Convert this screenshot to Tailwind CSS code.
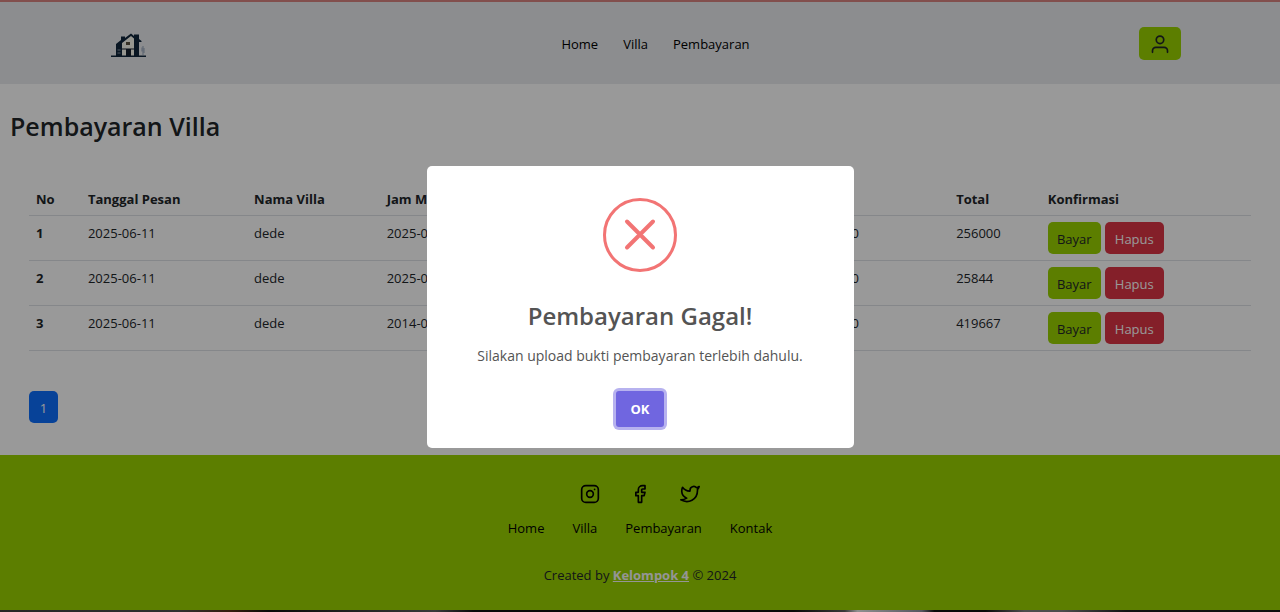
<!DOCTYPE html>
<html lang="id">
<head>
<meta charset="utf-8">
<meta name="viewport" content="width=device-width, initial-scale=1">
<title>Pembayaran Villa</title>
<script src="https://cdn.jsdelivr.net/npm/@tailwindcss/browser@4"></script>
</head>
<body class="min-h-screen bg-white font-['Open_Sans','Noto_Sans',sans-serif] text-[13px] leading-5 text-[#212529]">

<div class="h-[2px] bg-[#d98480]"></div>
<header class="flex h-[82px] items-center justify-between bg-[#e9ecef] pr-[99px] pl-[111px]">
  <a href="#" aria-label="Beranda" class="block pt-1">
    <svg class="h-[26px] w-9" viewBox="0 0 36 26">
      <path d="M11 11 L20 4 L24 7 V23.500 H11Z" fill="#fbfaf0"/>
      <path d="M5 12 L10 8 V4.500 H14 V6 L20 1.500 L23 4 V2.500 H28 V7 L30.500 9 V10 H28 V24 H23 V6.500 L20 4 L11 11 V24 H5Z" fill="#10253b"/>
      <path d="M15 10h4v3h-4z" fill="#5a5340"/>
      <path d="M11 16.500h12v1H11z M15 17h5v7h-5z" fill="#17212e"/>
      <path d="M6.500 18h3M6.500 21h3" stroke="#8997a5" stroke-width="1"/>
      <path d="M0 23.500h35v1.500H0z" fill="#10253b"/>
      <path d="M32 14v9M31 15.500v4M33 16v5" stroke="#94a3b8" stroke-width="1"/>
    </svg>
  </a>
  <nav class="flex gap-[25px] pt-px pl-[25px] text-black">
    <a href="#">Home</a>
    <a href="#">Villa</a>
    <a href="#">Pembayaran</a>
  </nav>
  <button type="button" aria-label="Akun" class="flex h-[33px] w-[42px] items-center justify-center rounded-[5px] bg-[#99d300] pt-[2px] text-[#212529]">
    <svg class="size-5" viewBox="0 0 24 24" fill="none" stroke="currentColor" stroke-width="2" stroke-linecap="round" stroke-linejoin="round"><path d="M21 22v-2a4 4 0 0 0-4-4H7a4 4 0 0 0-4 4v2"/><circle cx="12" cy="7" r="4.500"/></svg>
  </button>
</header>

<main>
  <h1 class="px-[10px] pt-[26px] pb-px text-[25px] leading-8 font-semibold">Pembayaran Villa</h1>
  <div class="px-[29px] pt-10 pb-8">
    <table class="w-full table-fixed border-collapse text-left">
      <colgroup>
        <col class="w-[4.25%]"><col class="w-[13.6%]"><col class="w-[10.85%]"><col class="w-[35%]"><col class="w-[11.6%]"><col class="w-[7.5%]"><col>
      </colgroup>
      <thead>
        <tr class="h-8 border-b border-[#dee2e6] font-bold">
          <th scope="col" class="px-[7px]">No</th>
          <th scope="col" class="px-[7px]">Tanggal Pesan</th>
          <th scope="col" class="px-[7px]">Nama Villa</th>
          <th scope="col" class="px-[7px]">Jam Masuk</th>
          <th scope="col" class="px-[7px]">Sewa</th>
          <th scope="col" class="px-[7px]">Total</th>
          <th scope="col" class="px-[7px]">Konfirmasi</th>
        </tr>
      </thead>
      <tbody class="align-top">
        <tr class="border-b border-[#dee2e6]">
          <th scope="row" class="px-[7px] pt-[7px]">1</th>
          <td class="px-[7px] pt-[7px]">2025-06-11</td>
          <td class="px-[7px] pt-[7px]">dede</td>
          <td class="px-[7px] pt-[7px]">2025-06-12</td>
          <td class="px-[7px] pt-[7px]">128000</td>
          <td class="px-[7px] pt-[7px]">256000</td>
          <td class="px-[7px] py-[6px]"><div class="flex gap-1">
            <button type="button" class="h-8 w-[53px] rounded-[5px] bg-[#99d300] pt-[2px]">Bayar</button>
            <button type="button" class="h-8 w-[59px] rounded-[5px] bg-[#dc3545] pt-[2px] text-white">Hapus</button>
          </div></td>
        </tr>
        <tr class="border-b border-[#dee2e6]">
          <th scope="row" class="px-[7px] pt-[7px]">2</th>
          <td class="px-[7px] pt-[7px]">2025-06-11</td>
          <td class="px-[7px] pt-[7px]">dede</td>
          <td class="px-[7px] pt-[7px]">2025-06-12</td>
          <td class="px-[7px] pt-[7px]">128000</td>
          <td class="px-[7px] pt-[7px]">25844</td>
          <td class="px-[7px] py-[6px]"><div class="flex gap-1">
            <button type="button" class="h-8 w-[53px] rounded-[5px] bg-[#99d300] pt-[2px]">Bayar</button>
            <button type="button" class="h-8 w-[59px] rounded-[5px] bg-[#dc3545] pt-[2px] text-white">Hapus</button>
          </div></td>
        </tr>
        <tr class="border-b border-[#dee2e6]">
          <th scope="row" class="px-[7px] pt-[7px]">3</th>
          <td class="px-[7px] pt-[7px]">2025-06-11</td>
          <td class="px-[7px] pt-[7px]">dede</td>
          <td class="px-[7px] pt-[7px]">2014-06-12</td>
          <td class="px-[7px] pt-[7px]">128000</td>
          <td class="px-[7px] pt-[7px]">419667</td>
          <td class="px-[7px] py-[6px]"><div class="flex gap-1">
            <button type="button" class="h-8 w-[53px] rounded-[5px] bg-[#99d300] pt-[2px]">Bayar</button>
            <button type="button" class="h-8 w-[59px] rounded-[5px] bg-[#dc3545] pt-[2px] text-white">Hapus</button>
          </div></td>
        </tr>
      </tbody>
    </table>
    <nav aria-label="Halaman" class="flex pt-10">
      <a href="#" aria-current="page" class="flex h-8 w-[29px] items-center justify-center rounded-[5px] bg-[#0d6efd] pt-[2px] text-white">1</a>
    </nav>
  </div>
</main>

<footer class="flex flex-col items-center bg-[#99d300] pt-[29px] pb-[25px]">
  <div class="flex gap-[30px] text-black">
    <a href="#" aria-label="Instagram"><svg class="size-5" viewBox="0 0 24 24" fill="none" stroke="currentColor" stroke-width="2" stroke-linecap="round" stroke-linejoin="round"><rect x="2" y="2" width="20" height="20" rx="5"/><circle cx="12" cy="12" r="4"/><path d="M17.500 6.500h.01"/></svg></a>
    <a href="#" aria-label="Facebook"><svg class="size-5" viewBox="0 0 24 24" fill="none" stroke="currentColor" stroke-width="2" stroke-linecap="round" stroke-linejoin="round"><path d="M18 2h-3a5 5 0 0 0-5 5v3H7v4h3v8h4v-8h3l1-4h-4V7a1 1 0 0 1 1-1h3z"/></svg></a>
    <a href="#" aria-label="Twitter"><svg class="size-5" viewBox="0 0 24 24" fill="none" stroke="currentColor" stroke-width="2" stroke-linecap="round" stroke-linejoin="round"><path d="M23 3a10.900 10.900 0 0 1-3.140 1.530 4.480 4.480 0 0 0-7.860 3v1A10.660 10.660 0 0 1 3 4s-4 9 5 13a11.640 11.640 0 0 1-7 2c9 5 20 0 20-11.500a4.500 4.500 0 0 0-.08-.83A7.720 7.720 0 0 0 23 3z"/></svg></a>
  </div>
  <nav class="flex gap-[28px] pt-[14px] text-black">
    <a href="#">Home</a>
    <a href="#">Villa</a>
    <a href="#">Pembayaran</a>
    <a href="#">Kontak</a>
  </nav>
  <p class="pt-[27px]">Created by <a href="#" class="font-bold text-[#f8f9fa] underline">Kelompok 4</a> © 2024</p>
</footer>
<div class="h-[2px] bg-[linear-gradient(to_right,#404040_0%,#505050_14%,#5a3018_18%,#101010_21%,#606060_34%,#101010_37%,#101010_62%,#606060_66%,#f0f0f0_67%,#9090a0_72%,#101010_73%,#101010_77%,#808080_80%,#808080_83%,#202020_88%,#181818_100%)]"></div>

<div class="fixed inset-0 flex items-center justify-center bg-black/40">
  <div role="dialog" aria-modal="true" aria-labelledby="judul" aria-describedby="pesan" class="mt-[2px] flex w-[427px] flex-col items-center rounded-[5px] bg-white pt-8 pb-[21px] text-[#545454]">
    <svg class="size-[74px]" viewBox="0 0 74 74" fill="none" stroke="#f27474"><circle cx="37" cy="37" r="35.500" stroke-width="3"/><path d="M24 23.500l26 26M50 23.500l-26 26" stroke-width="4" stroke-linecap="round"/></svg>
    <h2 id="judul" class="pt-7 text-[24px] leading-8 font-semibold">Pembayaran Gagal!</h2>
    <p id="pesan" class="pt-3 text-[14px] leading-6">Silakan upload bukti pembayaran terlebih dahulu.</p>
    <button type="button" class="mt-[23px] h-9 w-12 rounded-[3px] bg-[#7066e0] font-bold text-white ring-3 ring-[#b7b2ef]">OK</button>
  </div>
</div>
</body>
</html>
